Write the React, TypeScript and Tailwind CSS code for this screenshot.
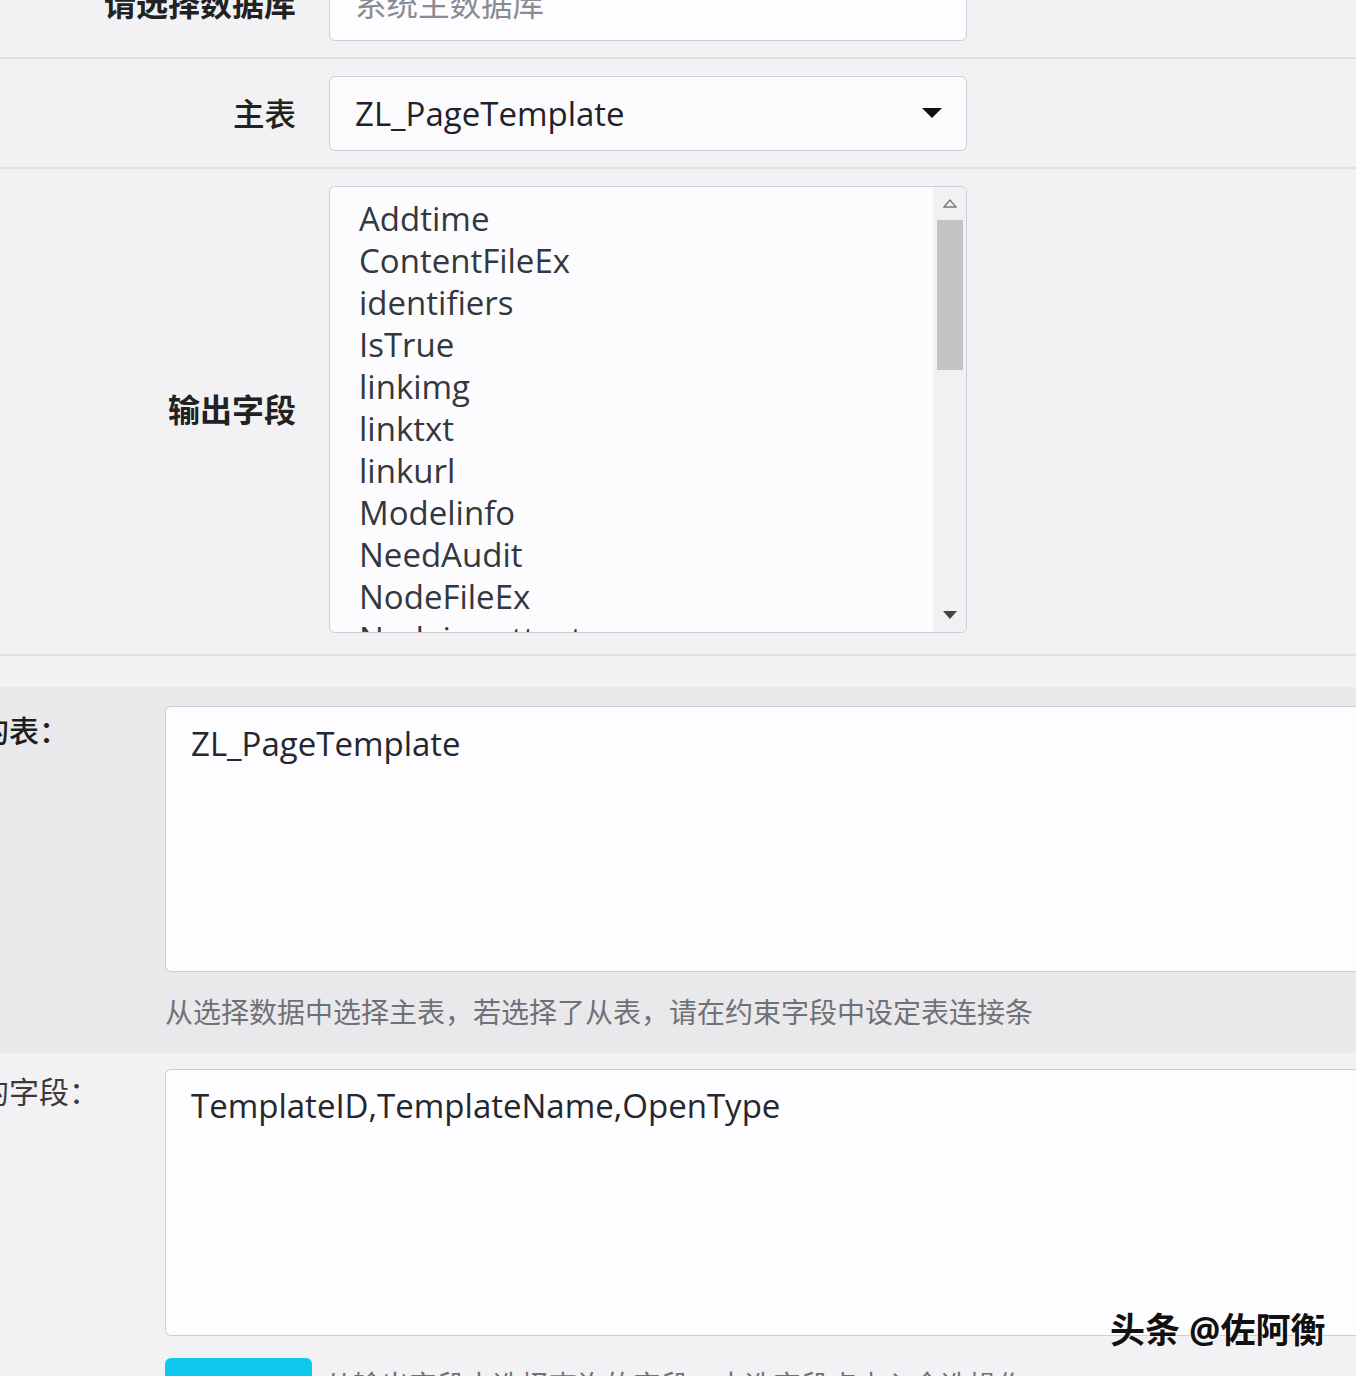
import React from "react"

const fields = [
  "Addtime",
  "ContentFileEx",
  "identifiers",
  "IsTrue",
  "linkimg",
  "linktxt",
  "linkurl",
  "Modelinfo",
  "NeedAudit",
  "NodeFileEx",
  "Nodeinputtext",
]

const font = { fontFamily: '"Open Sans", "Noto Sans CJK SC", sans-serif' }

export default function App() {
  return (
    <div className="relative w-[1356px] h-[1376px] overflow-hidden bg-[#f2f2f4] text-[#26282c]" style={font}>
      {/* top form */}
      <div className="-mt-[51px]">
        {/* database */}
        <div className="flex items-center border-b-2 border-[#e1e1e4] pt-[18px] pb-[16px]">
          <div className="w-[296px] shrink-0 text-right text-[32px] font-semibold text-[#222]">请选择数据库</div>
          <div className="ml-[33px] flex h-[74px] w-[638px] items-center rounded-[6px] border border-[#cdced3] bg-[#fdfcff] px-[25px] text-[31.5px] text-[#8a8b90]">
            系统主数据库
          </div>
        </div>

        {/* main table */}
        <div className="flex items-center border-b-2 border-[#e1e1e4] pt-[17px] pb-[16px]">
          <div className="w-[296px] shrink-0 text-right text-[31.5px] font-medium text-[#222]">主表</div>
          <div className="ml-[33px] flex h-[75px] w-[638px] items-center justify-between rounded-[6px] border border-[#cdced3] bg-[#fbfbfd] pl-[25px] pr-[24px]">
            <span className="text-[33px] text-[#1f2226]">ZL_PageTemplate</span>
            <svg width="20" height="11" viewBox="0 0 20 11">
              <path d="M0 0 L20 0 L10 10 Z" fill="#111" />
            </svg>
          </div>
        </div>

        {/* output fields */}
        <div className="flex items-center border-b-2 border-[#e1e1e4] pt-[17px] pb-[21px]">
          <div className="w-[296px] shrink-0 text-right text-[32px] font-bold text-[#222]">输出字段</div>
          <div className="ml-[33px] flex h-[447px] w-[638px] overflow-hidden rounded-[6px] border border-[#cdced3] bg-[#fcfcfe]">
            <div className="flex-1 overflow-hidden pl-[29px] pt-[11px]">
              {fields.map((f) => (
                <div key={f} className="h-[42px] text-[33px] leading-[42px] text-[#33373e]">
                  {f}
                </div>
              ))}
            </div>
            <div className="flex w-[33px] shrink-0 flex-col items-center bg-[#f1f1f3] pt-[12px] pb-[12px]">
              <svg width="14" height="9" viewBox="0 0 14 9">
                <path d="M1 8 L7 1 L13 8 Z" fill="none" stroke="#777" strokeWidth="1.3" />
              </svg>
              <div className="mt-[12px] h-[150px] w-[26px] bg-[#c3c2c5]" />
              <div className="flex-1" />
              <svg width="14" height="9" viewBox="0 0 14 9">
                <path d="M0 0 L14 0 L7 8 Z" fill="#444" />
              </svg>
            </div>
          </div>
        </div>
      </div>

      <div className="h-[31px]" />

      {/* selected table */}
      <div className="flex bg-[#e9e9ec] pt-[19px] pb-[22px]">
        <div className="-ml-[21px] w-[186px] shrink-0 pt-[2px] text-[30px] font-medium text-[#1e1e20]">的表：</div>
        <div className="flex w-[1250px] flex-col">
          <div className="h-[266px] rounded-l-[6px] border border-r-0 border-[#cdced3] bg-[#fdfcff] px-[25px] pt-[12px] text-[33px] text-[#24272c]">
            ZL_PageTemplate
          </div>
          <div className="mt-[21px] text-[28px] leading-[38px] text-[#707177]">
            从选择数据中选择主表，若选择了从表，请在约束字段中设定表连接条
          </div>
        </div>
      </div>

      {/* selected fields */}
      <div className="flex pt-[16px]">
        <div className="-ml-[21px] w-[186px] shrink-0 text-[30px] text-[#3a3a3e]">的字段：</div>
        <div className="flex w-[1250px] flex-col">
          <div className="h-[267px] rounded-l-[6px] border border-r-0 border-[#cdced3] bg-[#fdfcff] px-[25px] pt-[11px] text-[33px] text-[#24272c]">
            TemplateID,TemplateName,OpenType
          </div>
          <div className="mt-[22px] flex items-start">
            <div className="h-[50px] w-[147px] shrink-0 rounded-[6px] bg-[#0fc8ee]" />
            <div className="ml-[13px] pt-[8px] text-[28px] leading-[38px] text-[#707177]">
              从输出字段中选择查询的字段，未选字段点击入全选操作
            </div>
          </div>
        </div>
      </div>

      {/* watermark */}
      <div
        className="absolute left-[1110px] top-[1304px] text-[35px] font-bold text-[#111]"
        style={{ textShadow: "0 0 2px #fff, 0 0 2px #fff" }}
      >
        头条 @佐阿衡
      </div>
    </div>
  )
}
